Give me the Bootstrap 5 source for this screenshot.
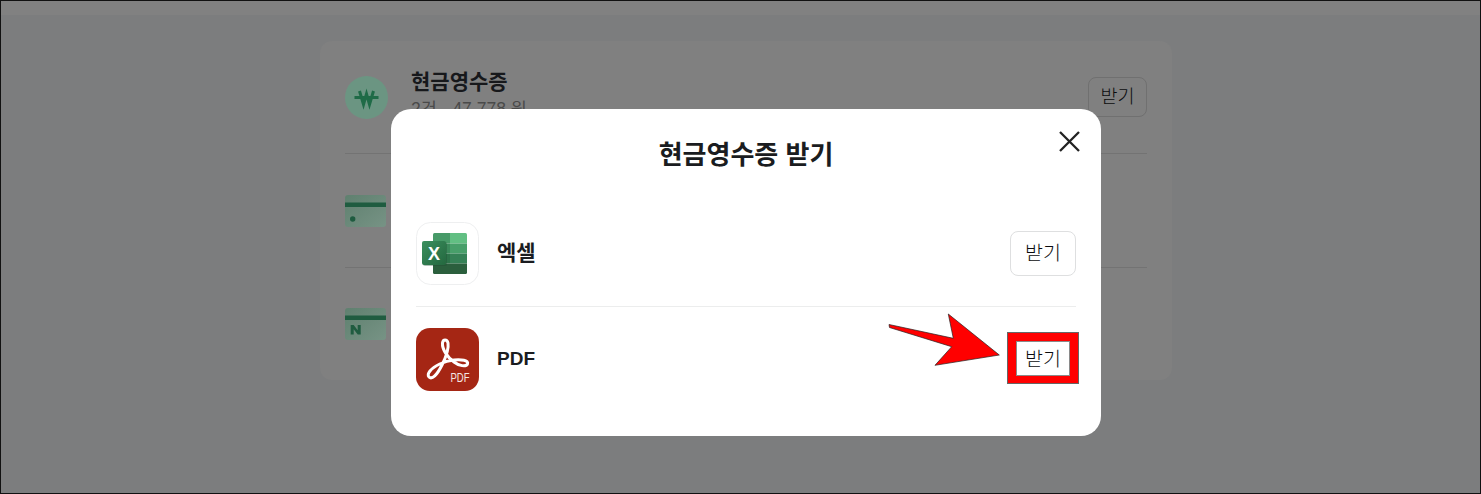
<!DOCTYPE html>
<html lang="ko">
<head>
<meta charset="utf-8">
<title>현금영수증 받기</title>
<link href="https://cdn.jsdelivr.net/npm/bootstrap@5.3.0/dist/css/bootstrap.min.css" rel="stylesheet">
<style>
html,body{height:100%;overflow:hidden;}
body{font-family:"Liberation Sans","Noto Sans CJK KR",sans-serif;background:#7c7d7e;color:#1a1c20;}
.frame{height:494px;border:1px solid #111;background:#7c7d7e;position:relative;overflow:hidden;}
.topstrip{height:14px;background:#818181;}
.under-card{width:852px;margin:26px 0 0 319px;height:339px;background:#808080;border-radius:12px;padding:0 25px;}
.under-row{border-bottom:1px solid #737373;}
.under-row-a{height:113px;}
.under-row-b{height:114px;}
.under-row-c{height:112px;border-bottom:0;}
.won{width:43px;height:43px;flex:none;display:block;}
.under-text{margin-left:23px;padding-bottom:2px;}
.under-name{font-size:21px;font-weight:700;line-height:26px;color:#17181b;}
.under-sub{font-size:17.500px;line-height:29px;color:#4a4a4a;}
.under-btn{width:59px;height:40px;border:1px solid #707070;border-radius:8px;background:transparent;font-size:18.500px;font-weight:300;line-height:1;color:#0b0c0e;padding:0;}
.cardicon{width:41px;height:32px;display:block;}
.dialog{position:absolute;left:390px;top:108px;width:710px;height:327px;background:#fff;border-radius:20px;padding:0 25px;}
.dialog-title{font-size:26px;font-weight:700;line-height:34px;margin:0;padding-top:29px;height:113px;text-align:center;color:#1a1c20;}
.closer{position:absolute;right:20px;top:21px;width:23px;height:23px;border:0;background:none;padding:0;line-height:0;}
.file-row-first{border-bottom:1px solid #eceded;height:85px;}
.file-row-second{height:105px;padding-top:21px;}
.appicon{width:63px;height:63px;flex:none;display:block;}
.file-name{font-size:21px;font-weight:700;color:#1a1c20;margin-left:18px;padding-bottom:2px;}
.file-name-latin{font-size:19px;padding-bottom:0;}
.get-btn{width:66px;height:45px;padding:0;border:1px solid #dedfe0;border-radius:8px;background:#fff;font-size:19.500px;font-weight:300;line-height:1;color:#0b0c0e;}
.callout-box{position:absolute;left:1006px;top:331px;width:72px;height:52px;border:9px solid #f00;border-bottom-width:8px;outline:1px solid #666;outline-offset:-1px;box-shadow:inset 0 0 0 1px #8a8a8a;pointer-events:none;}
.callout-arrow{position:absolute;left:879px;top:304px;}
</style>
</head>
<body>
<div class="frame">
  <div class="topstrip"></div>
  <div class="under-card">
    <div class="under-row under-row-a d-flex align-items-center">
      <svg class="won" viewBox="0 0 43 43">
        <circle cx="21.500" cy="21.500" r="21.500" fill="#6b9582"/>
        <path d="M9.500 21.500h24M14.500 15l4 13.500 3-10.500 3 10.500 4-13.500" fill="none" stroke="#1f6b47" stroke-width="3"/>
      </svg>
      <div class="under-text flex-grow-1">
        <div class="under-name">현금영수증</div>
        <div class="under-sub">2건 · 47,778 원</div>
      </div>
      <button type="button" class="btn under-btn">받기</button>
    </div>
    <div class="under-row under-row-b d-flex align-items-center">
      <svg class="cardicon" viewBox="0 0 41 32">
        <defs><linearGradient id="cg" x1="0" y1="0" x2="1" y2="1"><stop offset="0" stop-color="#5f806f"/><stop offset="1" stop-color="#779385"/></linearGradient></defs>
        <rect width="41" height="32" rx="3" fill="url(#cg)"/>
        <rect y="7.500" width="41" height="4.500" fill="#1f5c40"/>
        <circle cx="7.700" cy="24" r="2.700" fill="#1f5c40"/>
      </svg>
    </div>
    <div class="under-row under-row-c d-flex align-items-center">
      <svg class="cardicon" viewBox="0 0 41 32">
        <rect width="41" height="32" rx="3" fill="url(#cg)"/>
        <rect y="7.500" width="41" height="4.500" fill="#1f5c40"/>
        <path d="M5.700 26.500v-9.500h3l4 5.200v-5.200h3v9.500h-3l-4-5.200v5.200z" fill="#1f5c40"/>
      </svg>
    </div>
  </div>

  <div class="dialog" role="dialog">
    <h5 class="dialog-title">현금영수증 받기</h5>
    <button type="button" class="closer" aria-label="닫기">
      <svg width="23" height="23" viewBox="0 0 23 23"><path d="M2 2l19 19M21 2L2 21" stroke="#222" stroke-width="2.300" fill="none"/></svg>
    </button>
    <div class="file-row-first d-flex align-items-start">
      <div class="d-flex align-items-center w-100">
        <svg class="appicon" viewBox="0 0 63 63">
          <defs><linearGradient id="xg" x1="0" y1="0" x2="1" y2="1"><stop offset="0" stop-color="#3a8f5e"/><stop offset="1" stop-color="#24683f"/></linearGradient></defs>
          <rect x=".5" y=".5" width="62" height="62" rx="14" fill="#fff" stroke="#eeeff0"/>
          <path d="M17 12.500a1.500 1.500 0 0 1 1.500-1.500H34v10.500H17z" fill="#479a68"/>
          <path d="M34 11h15.500a1.500 1.500 0 0 1 1.500 1.500v9H34z" fill="#62bf83"/>
          <rect x="17" y="21.500" width="17" height="10" fill="#3b8a5b"/>
          <rect x="34" y="21.500" width="17" height="10" fill="#489f6a"/>
          <rect x="17" y="31.500" width="17" height="10" fill="#2d744a"/>
          <rect x="34" y="31.500" width="17" height="10" fill="#358156"/>
          <path d="M17 41.500h34v9a1.500 1.500 0 0 1-1.500 1.500h-31a1.500 1.500 0 0 1-1.500-1.500z" fill="#2b5f3d"/>
          <rect x="7" y="20" width="24" height="24" rx="2" fill="#1d4a30" opacity=".35"/>
          <rect x="6" y="19" width="24" height="24" rx="2" fill="url(#xg)"/>
          <text x="18" y="37.500" text-anchor="middle" font-family="Liberation Sans" font-weight="700" font-size="18" fill="#fff">X</text>
        </svg>
        <span class="file-name flex-grow-1">엑셀</span>
        <button type="button" class="btn get-btn">받기</button>
      </div>
    </div>
    <div class="file-row-second d-flex align-items-start">
      <div class="d-flex align-items-center w-100">
        <svg class="appicon" viewBox="0 0 63 63">
          <rect width="63" height="63" rx="14" fill="#a52614"/>
          <path d="M13 49C16 52 21 47 26 37C30 29 33 21 32 15C31 11 27 11 26.500 15C26 21 31 29 38 34C43 38 50 39 51.500 36C53 32 45 31.500 38 32C28 33 18 38 14 43C12 45.500 12 48 13 49Z" fill="none" stroke="#fff" stroke-width="3"/>
          <text x="34.500" y="54" font-family="Liberation Sans" font-size="12" textLength="19" lengthAdjust="spacingAndGlyphs" fill="#f5e6e3">PDF</text>
        </svg>
        <span class="file-name file-name-latin flex-grow-1">PDF</span>
        <button type="button" class="btn get-btn">받기</button>
      </div>
    </div>
  </div>

  <svg class="callout-arrow" width="125" height="70" viewBox="880 305 125 70">
    <polygon points="889,324.500 889.500,327.500 951.700,346.700 935,365.300 999.300,355 948.300,314 953.300,338.300" fill="#f00" stroke="#222" stroke-width=".7"/>
  </svg>
  <div class="callout-box"></div>
</div>
<script src="https://cdn.jsdelivr.net/npm/bootstrap@5.3.0/dist/js/bootstrap.bundle.min.js"></script>
</body>
</html>
